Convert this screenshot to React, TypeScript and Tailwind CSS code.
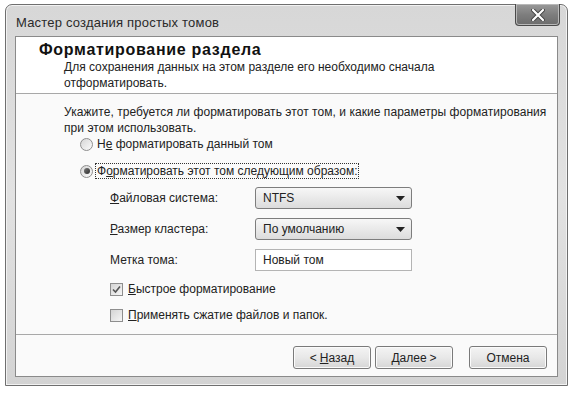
import React from 'react';

function Radio({ checked }: { checked?: boolean }) {
    return (
        <span className="w-[13px] h-[13px] rounded-full border border-[#8e8e8e] bg-gradient-to-br from-[#d6d6d6] to-[#fbfbfb] flex items-center justify-center shrink-0">
            {checked && <span className="w-[6px] h-[6px] rounded-full bg-gradient-to-br from-[#7a7a7a] to-[#2e2e2e]" />}
        </span>
    );
}

function Checkbox({ checked }: { checked?: boolean }) {
    return (
        <span className="w-[13px] h-[13px] border border-[#8e8e8e] bg-gradient-to-br from-[#d4d4d4] to-[#f6f6f6] flex items-center justify-center shrink-0">
            {checked && (
                <svg width="9" height="9" viewBox="0 0 9 9">
                    <path d="M1 4.5 L3.5 7 L8 1.5" fill="none" stroke="#555" strokeWidth="1.6" />
                </svg>
            )}
        </span>
    );
}

function Combo({ value }: { value: string }) {
    return (
        <div className="w-[157px] h-[22px] rounded-[3px] border border-[#7d7d7d] bg-gradient-to-b from-[#f7f7f7] to-[#dcdcdc] flex items-center justify-between pl-[7px] pr-[6px]">
            <span>{value}</span>
            <svg width="9" height="5" viewBox="0 0 9 5">
                <path d="M0 0 H9 L4.5 5 Z" fill="#222" />
            </svg>
        </div>
    );
}

function WizButton({ children }: { children: React.ReactNode }) {
    return (
        <div className="w-[78px] h-[23px] rounded-[3px] border border-[#7a7a7a] bg-gradient-to-b from-[#f4f4f4] via-[#e8e8e8] to-[#d6d6d6] shadow-[inset_0_0_0_1px_#fbfbfb] flex items-center justify-center">
            {children}
        </div>
    );
}

export default function App() {
    return (
        <div className="w-[577px] h-[393px] bg-white pt-[4px] pl-[5px] [font-family:'Liberation_Sans',Arial,sans-serif] text-[12px] leading-[16px] text-[#222]">
            <div className="w-[563px] h-[382px] rounded-t-[7px] border border-[#6f6f6f] bg-gradient-to-b from-[#d7d7d7] via-[#e2e2e2] to-[#d3d3d3] shadow-[inset_0_0_0_1px_#f2f2f2] flex flex-col px-[9px] pb-[8px]">
                {/* Title bar */}
                <div className="h-[31px] flex items-start justify-between">
                    <span className="mt-[10px] ml-[1px] text-[13px] tracking-[0.2px] text-[#2a2a2a]">Мастер создания простых томов</span>
                    <div className="-mt-px -mr-[2px] w-[45px] h-[22px] rounded-b-[4px] border border-t-0 border-[#4a4a4a] bg-gradient-to-b from-[#9a9a9a] via-[#7e7e7e] to-[#6c6c6c] shadow-[inset_0_0_0_1px_#b8b8b8] flex items-center justify-center">
                        <svg width="14" height="12" viewBox="0 0 14 12">
                            <path d="M2 1 L12 11 M12 1 L2 11" stroke="#444" strokeWidth="4" strokeLinecap="round" />
                            <path d="M2 1 L12 11 M12 1 L2 11" stroke="#fff" strokeWidth="2.2" strokeLinecap="round" />
                        </svg>
                    </div>
                </div>

                {/* Client area */}
                <div className="flex-1 border border-[#8a8a8a] bg-white flex flex-col">
                    <div className="h-[57px] border-b border-[#a8a8a8] pt-[3px]">
                        <div className="pl-[23px] font-bold text-[16px] leading-[19px] tracking-[0.7px] text-[#111]">Форматирование раздела</div>
                        <div className="pl-[48px] whitespace-nowrap">
                            Для сохранения данных на этом разделе его необходимо сначала
                            <br />
                            отформатировать.
                        </div>
                    </div>

                    <div className="flex-1 bg-[#fafafa] pl-[48px] pt-[10px]">
                        <div className="whitespace-nowrap tracking-[0.05px]">
                            Укажите, требуется ли форматировать этот том, и какие параметры форматирования
                            <br />
                            при этом использовать.
                        </div>
                        <div className="ml-[16px] flex items-center gap-[4px] h-[16px]">
                            <Radio />
                            <span>
                                Н<span className="underline">е</span> форматировать данный том
                            </span>
                        </div>
                        <div className="ml-[16px] mt-[11px] flex items-center gap-[2px] h-[16px]">
                            <Radio checked />
                            <span className="border border-dotted border-[#333] px-px leading-[14px]">
                                Ф<span className="underline">о</span>рматировать этот том следующим образом:
                            </span>
                        </div>

                        <div className="ml-[46px] mt-[8px] grid grid-cols-[145px_157px] gap-y-[9px] items-center">
                            <span>
                                <span className="underline">Ф</span>айловая система:
                            </span>
                            <Combo value="NTFS" />
                            <span>
                                <span className="underline">Р</span>азмер кластера:
                            </span>
                            <Combo value="По умолчанию" />
                            <span>Метка тома:</span>
                            <div className="h-[22px] border border-[#b4b4b4] bg-white flex items-center pl-[7px]">Новый том</div>
                        </div>

                        <div className="ml-[46px] mt-[10px] flex items-center gap-[5px] h-[16px]">
                            <Checkbox checked />
                            <span>
                                <span className="underline">Б</span>ыстрое форматирование
                            </span>
                        </div>
                        <div className="ml-[46px] mt-[10px] flex items-center gap-[5px] h-[16px]">
                            <Checkbox />
                            <span>
                                <span className="underline">П</span>рименять сжатие файлов и папок.
                            </span>
                        </div>
                    </div>

                    <div className="h-[42px] border-t border-[#a8a8a8] bg-[#fafafa] flex items-start justify-end pt-[11px] pr-[10px]">
                        <WizButton>
                            &lt; <span className="ml-[3px] underline">Н</span>азад
                        </WizButton>
                        <div className="ml-[4px]">
                            <WizButton>
                                <span className="underline">Д</span>алее <span className="ml-[3px]">&gt;</span>
                            </WizButton>
                        </div>
                        <div className="ml-[16px]">
                            <WizButton>Отмена</WizButton>
                        </div>
                    </div>
                </div>
            </div>
        </div>
    );
}
